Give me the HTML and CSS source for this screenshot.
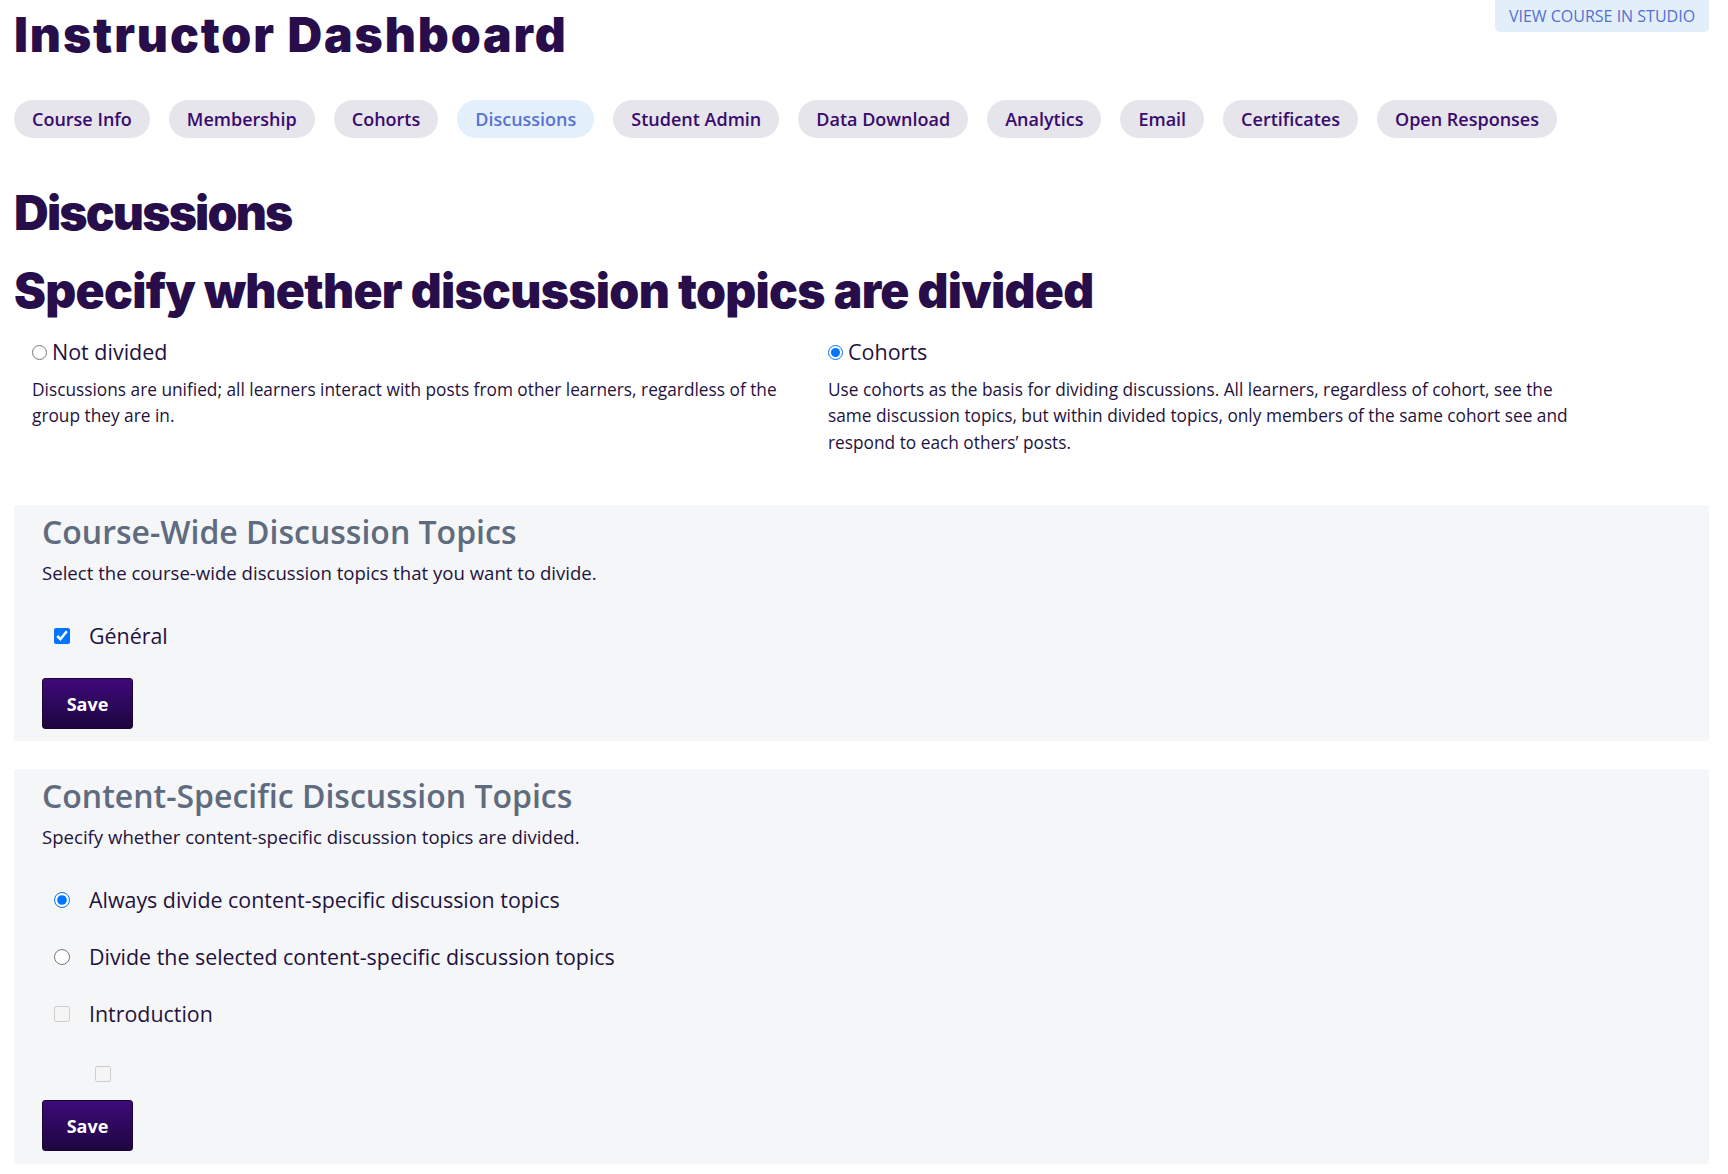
FILE: index.html
```html
<!DOCTYPE html>
<html lang="en">
<head>
<meta charset="utf-8">
<title>Instructor Dashboard</title>
<link rel="stylesheet" href="styles.css">
</head>
<body>
<div class="page">
  <header class="top">
    <h1 class="title">Instructor Dashboard</h1>
    <a class="studio" href="#">VIEW COURSE IN STUDIO</a>
  </header>
  <nav class="tabs">
    <a class="tab" href="#">Course Info</a>
    <a class="tab" href="#">Membership</a>
    <a class="tab" href="#">Cohorts</a>
    <a class="tab active" href="#">Discussions</a>
    <a class="tab" href="#">Student Admin</a>
    <a class="tab" href="#">Data Download</a>
    <a class="tab" href="#">Analytics</a>
    <a class="tab" href="#">Email</a>
    <a class="tab" href="#">Certificates</a>
    <a class="tab" href="#">Open Responses</a>
  </nav>

  <h2 class="h-section">Discussions</h2>
  <h3 class="h-sub">Specify whether discussion topics are divided</h3>

  <div class="scheme">
    <div class="scheme-col">
      <label class="scheme-label"><input type="radio" name="scheme" class="radio-sm"> Not divided</label>
      <p class="scheme-desc">Discussions are unified; all learners interact with posts from other learners, regardless of the group they are in.</p>
    </div>
    <div class="scheme-col">
      <label class="scheme-label"><input type="radio" name="scheme" class="radio-sm" checked> Cohorts</label>
      <p class="scheme-desc">Use cohorts as the basis for dividing discussions. All learners, regardless of cohort, see the same discussion topics, but within divided topics, only members of the same cohort see and respond to each others’ posts.</p>
    </div>
  </div>

  <section class="panel">
    <h4 class="panel-title">Course-Wide Discussion Topics</h4>
    <p class="panel-text">Select the course-wide discussion topics that you want to divide.</p>
    <label class="opt opt-general"><input type="checkbox" checked> Général</label>
    <button class="save">Save</button>
  </section>

  <section class="panel panel2">
    <h4 class="panel-title">Content-Specific Discussion Topics</h4>
    <p class="panel-text">Specify whether content-specific discussion topics are divided.</p>
    <label class="opt opt-first"><input type="radio" name="cs" checked> Always divide content-specific discussion topics</label>
    <label class="opt"><input type="radio" name="cs"> Divide the selected content-specific discussion topics</label>
    <label class="opt"><input type="checkbox" disabled> Introduction</label>
    <label class="opt opt-sub"><input type="checkbox" disabled></label>
    <button class="save save2">Save</button>
  </section>
</div>
</body>
</html>
```
FILE: styles.css
```css
* { box-sizing: border-box; }
html, body { margin: 0; padding: 0; background: #fff; }
body {
  font-family: "Open Sans", "Noto Sans", sans-serif;
  color: #1f1240;
}
.page {
  padding: 0 19px 0 14px;
}
.top {
  display: flex;
  justify-content: space-between;
  align-items: flex-start;
}
.title {
  margin: 0;
  padding-top: 6px;
  font-family: "Inter", "Lato", sans-serif;
  font-weight: 900;
  font-size: 48px;
  line-height: 58px;
  color: #270e4b;
  letter-spacing: 1.9px;
}
.studio {
  display: inline-block;
  background: #e3eefb;
  color: #5271cf;
  font-size: 16px;
  line-height: 32px;
  border-radius: 0 0 5px 5px;
  text-decoration: none;
  width: 214px;
  white-space: nowrap;
  text-align: center;
}
.tabs {
  display: flex;
  gap: 19px;
  margin-top: 36px;
}
.tab {
  display: inline-block;
  background: #e5e5eb;
  color: #3a0a6e;
  font-size: 18px;
  font-weight: 600;
  line-height: 38px;
  padding: 0 18px;
  border-radius: 19px;
  text-decoration: none;
}
.tab.active {
  background: #e4effc;
  color: #5a73d2;
}
.h-section {
  margin: 46px 0 0;
  font-family: "Inter", "Lato", sans-serif;
  font-weight: 900;
  font-size: 48px;
  line-height: 58px;
  color: #270e4b;
  letter-spacing: -1.8px;
}
.h-sub {
  margin: 20px 0 0;
  font-family: "Inter", "Lato", sans-serif;
  font-weight: 900;
  font-size: 48px;
  line-height: 58px;
  color: #270e4b;
  letter-spacing: -0.7px;
}
.scheme {
  display: grid;
  grid-template-columns: 796px 770px;
  padding-left: 18px;
  margin-top: 17px;
}
.scheme-label {
  display: flex;
  align-items: center;
  gap: 5px;
  font-size: 21.5px;
  line-height: 30px;
  color: #1f1240;
}
.radio-sm {
  width: 15px;
  height: 15px;
  margin: 0;
}
.scheme-desc {
  margin: 10px 0 0;
  font-size: 17.3px;
  line-height: 26.4px;
  color: #1f1240;
}
.scheme-col:first-child .scheme-desc { max-width: 770px; }
.scheme-col:last-child .scheme-desc { max-width: 760px; }
.panel {
  background: #f5f6f8;
  border-radius: 3px;
  margin-top: 49px;
  padding: 5px 28px 12px;
  display: flex;
  flex-direction: column;
  align-items: flex-start;
}
.panel2 { margin-top: 28px; padding-bottom: 13px; }
.panel-title {
  margin: 0;
  font-size: 32px;
  font-weight: 600;
  line-height: 44px;
  color: #5f6b7e;
}
.panel-text {
  margin: 6px 0 0;
  font-size: 18.6px;
  line-height: 26px;
  color: #1f1240;
}
.opt {
  display: flex;
  align-items: center;
  gap: 19px;
  font-size: 21.4px;
  line-height: 30px;
  color: #1f1240;
  margin-top: 27px;
  padding-left: 12px;
}
.opt-general { margin-top: 35px; }
.panel2 .opt-first { margin-top: 35px; }
.opt input {
  width: 16px;
  height: 16px;
  margin: 0;
}
.panel2 .opt-sub { padding-left: 53px; margin-top: 37px; }
.save {
  margin-top: 27px;
  width: 91px;
  height: 51px;
  border: 1px solid #1a0533;
  border-radius: 3px;
  background: linear-gradient(#3e0a7a, #1d0540);
  color: #fff;
  font-family: "Open Sans", sans-serif;
  font-weight: 700;
  font-size: 18px;
  padding: 0;
}
.save2 { margin-top: 18px; }
```
